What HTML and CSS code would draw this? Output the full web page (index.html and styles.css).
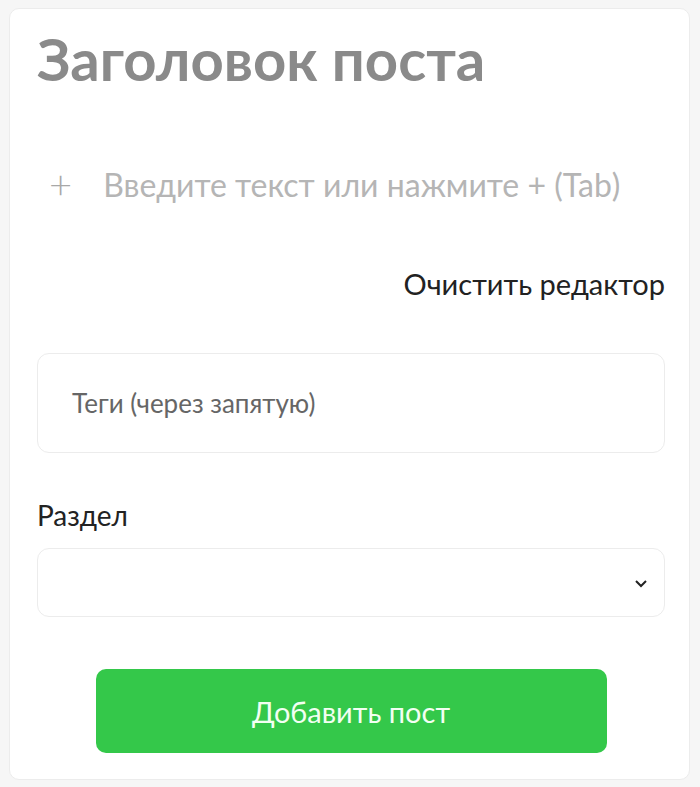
FILE: index.html
```html
<!DOCTYPE html>
<html lang="ru">
  <head>
    <meta charset="UTF-8" />
    <meta name="viewport" content="width=device-width, initial-scale=1.0" />
    <title>Новый пост</title>
    <link rel="stylesheet" href="styles.css">
  </head>
  <body>
    <main class="card">
      <h1 class="title">Заголовок поста</h1>

      <div class="editor">
        <span class="plus">+</span>
        <span class="hint">Введите текст или нажмите + (Tab)</span>
      </div>

      <div class="clear-row">
        <button class="clear">Очистить редактор</button>
      </div>

      <div class="field tags">Теги (через запятую)</div>

      <label class="label">Раздел</label>
      <div class="field select">
        <svg width="14" height="10" viewBox="0 0 14 10">
          <path d="M2 3 L7 8 L12 3" fill="none" stroke="#222" stroke-width="2" />
        </svg>
      </div>

      <div class="submit-row">
        <button class="submit">Добавить пост</button>
      </div>
    </main>
  </body>
</html>
```

FILE: styles.css
```css
body {
  margin: 0;
  padding: 8px 10px 8px 9px;
  background-color: #f6f6f6;
  font-family: Lato, "Noto Sans", sans-serif;
}

.card {
  background-color: white;
  border: 1px solid #ececec;
  border-radius: 10px;
  padding: 18px 24px 26px 27px;
  display: flex;
  flex-direction: column;
}

.title {
  margin: 0;
  font-size: 58px;
  font-weight: 700;
  color: #8a8a8a;
  line-height: 64px;
}

.editor {
  display: flex;
  align-items: center;
  gap: 31px;
  margin-top: 73px;
  padding-left: 12px;
  height: 40px;
}

.plus {
  font-size: 40px;
  font-weight: 300;
  color: #a8a8a8;
  line-height: 40px;
}

.hint {
  font-size: 32px;
  color: #b5b5b5;
}

.clear-row {
  display: flex;
  justify-content: flex-end;
  margin-top: 64px;
}

.clear {
  font-family: inherit;
  font-size: 29px;
  line-height: 32px;
  color: #222;
  background: none;
  border: none;
  padding: 0;
}

.field {
  border: 1px solid #ececec;
  border-radius: 12px;
  display: flex;
  align-items: center;
}

.tags {
  margin-top: 53px;
  height: 98px;
  padding-left: 34px;
  font-size: 26px;
  color: #666;
}

.label {
  margin-top: 46px;
  font-size: 28px;
  line-height: 32px;
  color: #222;
}

.select {
  margin-top: 17px;
  height: 67px;
  justify-content: flex-end;
  padding-right: 16px;
}

.submit-row {
  display: flex;
  justify-content: center;
  margin-top: 52px;
}

.submit {
  width: 511px;
  height: 84px;
  border: none;
  border-radius: 10px;
  background-color: #34c84a;
  color: #f2fff2;
  font-family: inherit;
  font-size: 29px;
}
```
